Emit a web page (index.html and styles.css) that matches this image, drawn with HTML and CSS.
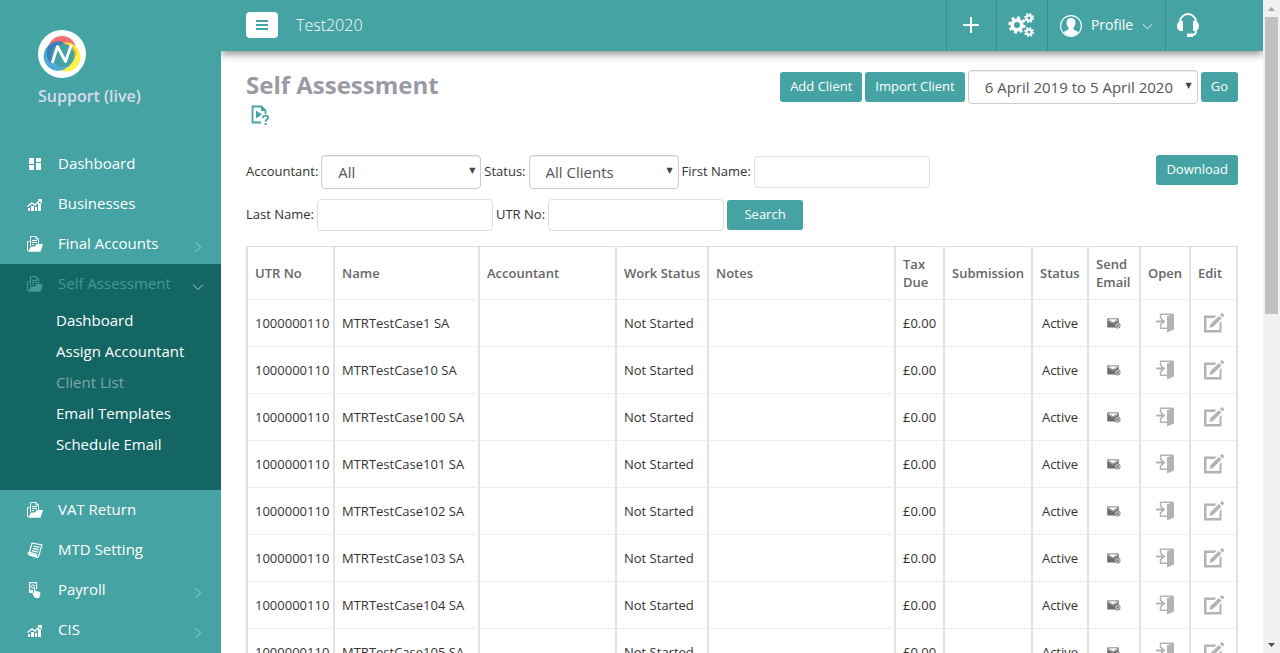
FILE: index.html
```html
<!DOCTYPE html>
<html lang="en">
<head>
<meta charset="utf-8">
<title>Self Assessment</title>
<link rel="stylesheet" href="styles.css">
</head>
<body>
<svg class="sprite" aria-hidden="true">
  <symbol id="i-grid" viewBox="0 0 16 16"><path fill="currentColor" d="M2 2h5v6H2zM9 2h5v4H9zM2 9h5v5H2zM9 7h5v7H9z"/></symbol>
  <symbol id="i-chart" viewBox="0 0 16 16"><path fill="currentColor" d="M1 12h2v3H1zM4 10h3v5H4zM8 11h2v4H8zM11 7h3v8h-3z"/><path fill="none" stroke="currentColor" stroke-width="1.5" d="M.5 10.500 5 7l3 2 5-5"/><path fill="currentColor" d="M10.500 3H15v4.500z"/></symbol>
  <symbol id="i-folder" viewBox="0 0 16 16"><path fill="none" stroke="currentColor" stroke-width="1" d="M3.500 10V.5H9L11.500 3v6M9 .5V3h2.500M.5 15V5.500h2M5 4.500h5M5 6.500h5M5 8.500h2"/><path fill="currentColor" d="M1 15.800 4 10.500h4L9.500 8H16l-2.500 7.800z"/></symbol>
  <symbol id="i-scroll" viewBox="0 0 16 16"><path fill="none" stroke="currentColor" stroke-width="1.200" d="M5 1l10 2-3.500 11.500c-.5 1-1.500 1-2 .5L1.500 12c-.5-1 0-2 1-2M5 1 2.500 10l7 2.500V15M6.500 4l6 1.300M5.800 6.300l6 1.400M5 8.600l6 1.600"/><path fill="currentColor" d="M.5 10.500l9 2.500v2.800L2 13.500z"/></symbol>
  <symbol id="i-pay" viewBox="0 0 16 16"><path fill="none" stroke="currentColor" stroke-width="1.200" d="M6 10.500H2.600V.6h7V7"/><path fill="currentColor" d="M3 8h3v2H3z"/><circle cx="6" cy="4.500" r="1.600" fill="none" stroke="currentColor"/><path fill="currentColor" d="M7 5.500c1 0 1.300.5 1.300 1.500v2l4 .7c1 .3 1.200 1 1 2.500L12 16.500H8.500L5.500 12c0-1 .5-1.200 1.200-.8z"/></symbol>
  <symbol id="i-chev" viewBox="0 0 12 12"><path fill="none" stroke="currentColor" d="M3.500 1 8.500 6 3.500 11"/></symbol>
  <symbol id="i-chevd" viewBox="0 0 12 12"><path fill="none" stroke="currentColor" d="M1 3.500 6 8.500 11 3.500"/></symbol>
  <symbol id="i-mail" viewBox="0 0 14 11"><path fill="#6b6e70" d="M.5 2 6 5.500 11.500 2v7.500H.5z"/><path fill="none" stroke="#8a8d8f" d="M.5 9V.8h11V4M1 1l5 4 5-4"/><circle cx="10.500" cy="7.500" r="3" fill="#7a7d7f"/><circle cx="10.500" cy="7.500" r="1.800" fill="none" stroke="#eee" stroke-width=".8"/></symbol>
  <symbol id="i-door" viewBox="0 0 18 20"><path fill="none" stroke="#b3b3b3" stroke-width="1.400" d="M4.500 6V1.200H17M4.500 11v4.300H11"/><path fill="#b3b3b3" d="M11 3.300 18 1v15.500L11 19.500zM0 7.500h5V4.800l4.500 3.700L5 12.200V9.500H0z"/></symbol>
  <symbol id="i-edit" viewBox="0 0 20 20"><path fill="#b3b3b3" d="M0 2.500h12.500L10.500 5H2.500v12h13V10l2-2v11.500H0z"/><path fill="#b3b3b3" d="M5.500 15l1-4L15 3l2.500 2.500-8.300 8.200zM16 2l1.500-1.700h1L20 2v1l-1.600 1.500z"/></symbol>
</svg>

<div class="app">
  <aside class="sidebar">
    <div class="brand">
      <svg class="brand-logo" viewBox="0 0 48 48" role="img" aria-label="Nomisma">
        <circle cx="24" cy="24" r="24" fill="#fff"/>
        <circle cx="24" cy="20" r="14" fill="#f36f72"/>
        <circle cx="28" cy="27" r="14.500" fill="#fff04a"/>
        <path d="M24 13.200a14.500 14.500 0 0 1 14 6.800l1 4-3 5L22 15z" fill="#fbc02d"/>
        <path d="M27 13.500a14.500 14.500 0 1 0-1 26l6-4-10-12z" fill="#4fa9d8"/>
        <path d="M10 16.500a14.500 14.500 0 0 1 15-4.500v6L14 34a14 14 0 0 1-4-17.500z" fill="#3f7fb8"/>
        <circle cx="25" cy="25.500" r="11.500" fill="#45a3a3"/>
        <path d="M14.500 32 19.500 16.500l8 15L33 16" fill="none" stroke="#fff" stroke-width="2.800" stroke-linecap="round" stroke-linejoin="round"/>
      </svg>
      <div class="brand-name">Support (live)</div>
    </div>
    <nav class="nav">
      <a class="nav-item" href="#"><svg class="nav-icon"><use href="#i-grid"/></svg><span>Dashboard</span></a>
      <a class="nav-item" href="#"><svg class="nav-icon"><use href="#i-chart"/></svg><span>Businesses</span></a>
      <a class="nav-item" href="#"><svg class="nav-icon"><use href="#i-folder"/></svg><span>Final Accounts</span><svg class="nav-chev"><use href="#i-chev"/></svg></a>
      <div class="nav-group">
        <a class="nav-item nav-current" href="#"><svg class="nav-icon"><use href="#i-folder"/></svg><span>Self Assessment</span><svg class="nav-chev"><use href="#i-chevd"/></svg></a>
        <div class="subnav">
          <a href="#">Dashboard</a>
          <a href="#">Assign Accountant</a>
          <a class="sub-current" href="#">Client List</a>
          <a href="#">Email Templates</a>
          <a href="#">Schedule Email</a>
        </div>
      </div>
      <a class="nav-item" href="#"><svg class="nav-icon"><use href="#i-folder"/></svg><span>VAT Return</span></a>
      <a class="nav-item" href="#"><svg class="nav-icon"><use href="#i-scroll"/></svg><span>MTD Setting</span></a>
      <a class="nav-item" href="#"><svg class="nav-icon"><use href="#i-pay"/></svg><span>Payroll</span><svg class="nav-chev"><use href="#i-chev"/></svg></a>
      <a class="nav-item" href="#"><svg class="nav-icon"><use href="#i-chart"/></svg><span>CIS</span><svg class="nav-chev"><use href="#i-chev"/></svg></a>
    </nav>
  </aside>

  <div class="main">
    <header class="topbar">
      <button class="menu-btn" type="button" aria-label="Toggle menu"><svg viewBox="0 0 12 10"><path fill="#45a3a3" d="M0 0h12v2H0zM0 4h12v2H0zM0 8h12v2H0z"/></svg></button>
      <div class="company">Test2020</div>
      <div class="top-actions">
        <button class="top-btn add" type="button" aria-label="Add"><svg viewBox="0 0 16 16"><path fill="#fff" d="M7 0h2v7h7v2H9v7H7V9H0V7h7z"/></svg></button>
        <button class="top-btn gears" type="button" aria-label="Settings"><svg viewBox="0 0 26 24">
          <circle cx="9" cy="12" r="4.800" fill="none" stroke="#fff" stroke-width="3.600"/><circle cx="9" cy="12" r="7.400" fill="none" stroke="#fff" stroke-width="2.600" stroke-dasharray="2.906 2.906"/>
          <circle cx="21" cy="5" r="2.600" fill="none" stroke="#fff" stroke-width="2.200"/><circle cx="21" cy="5" r="4.200" fill="none" stroke="#fff" stroke-width="1.800" stroke-dasharray="1.650 1.650"/>
          <circle cx="21" cy="19" r="2.600" fill="none" stroke="#fff" stroke-width="2.200"/><circle cx="21" cy="19" r="4.200" fill="none" stroke="#fff" stroke-width="1.800" stroke-dasharray="1.650 1.650"/></svg></button>
        <button class="top-btn profile" type="button">
          <svg class="avatar" viewBox="0 0 22 22"><circle cx="11" cy="11" r="10.400" fill="none" stroke="#fff" stroke-width="1.100"/><path fill="#fff" d="M11 3c3 0 4.500 1.800 4.500 4.500 0 2.500-1 4-2 5v2l5 2.500a9.500 9.500 0 0 1-15 0l5-2.500v-2c-1-1-2-2.500-2-5C6.500 4.800 8 3 11 3z"/></svg>
          <span>Profile</span>
          <svg class="caret"><use href="#i-chevd"/></svg>
        </button>
        <button class="top-btn support" type="button" aria-label="Support"><svg viewBox="0 0 22 24"><path fill="none" stroke="#fff" stroke-width="2" d="M3 10V9a8 8 0 0 1 16 0v9c0 2.500-1.500 4-4 4"/><path fill="#fff" d="M6 8v10H4c-2.500 0-4-2.200-4-5s1.500-5 4-5zM16 8v10h2c2.500 0 4-2.200 4-5s-1.500-5-4-5zM10 20.500h6V24h-6z"/></svg></button>
      </div>
    </header>

    <main class="content">
      <div class="page-head">
        <div>
          <h1>Self Assessment</h1>
          <a class="help" href="#" aria-label="Video help"><svg viewBox="0 0 18 20"><path fill="none" stroke="#45a3a3" stroke-width="1.800" d="M10 17.500H1.500V1.500h9l4 4V9"/><path fill="#45a3a3" d="M10 1v5h5zM5 5.500 11 9.500 5 13.500z"/><path fill="none" stroke="#45a3a3" stroke-width="1.800" d="M11.800 13c0-3.400 5.300-3 5.300-.3 0 2-2.500 1.800-2.500 4"/><path fill="#45a3a3" d="M13.600 18h2v2h-2z"/></svg></a>
        </div>
        <div class="head-actions">
          <button class="btn" type="button">Add Client</button>
          <button class="btn" type="button">Import Client</button>
          <div class="select year"><select aria-label="Tax year"><option>6 April 2019 to 5 April 2020</option></select></div>
          <button class="btn" type="button">Go</button>
        </div>
      </div>

      <form class="filter-bar">
        <div class="filters">
          <div class="field"><label for="acc">Accountant:</label><div class="select accountant"><select id="acc"><option>All</option></select></div></div>
          <div class="field"><label for="status">Status:</label><div class="select status"><select id="status"><option>All Clients</option></select></div></div>
          <div class="field"><label for="first">First Name:</label><input id="first" type="text"></div>
          <div class="field"><label for="last">Last Name:</label><input id="last" type="text"></div>
          <div class="field"><label for="utr">UTR No:</label><input id="utr" type="text"></div>
          <button class="btn search" type="button">Search</button>
        </div>
        <button class="btn" type="button">Download</button>
      </form>

      <table class="clients">
        <colgroup><col class="c-utr"><col class="c-name"><col class="c-acc"><col class="c-work"><col><col class="c-tax"><col class="c-sub"><col class="c-status"><col class="c-send"><col class="c-open"><col class="c-edit"></colgroup>
        <thead><tr><th>UTR No</th><th>Name</th><th>Accountant</th><th class="one-line">Work Status</th><th>Notes</th><th>Tax Due</th><th>Submission</th><th>Status</th><th>Send Email</th><th>Open</th><th>Edit</th></tr></thead>
        <tbody>
          <tr><td>1000000110</td><td>MTRTestCase1 SA</td><td></td><td>Not Started</td><td></td><td>£0.00</td><td></td><td class="mid">Active</td><td class="mid"><svg class="i-mail"><use href="#i-mail"/></svg></td><td class="mid"><svg class="i-door"><use href="#i-door"/></svg></td><td class="mid"><svg class="i-edit"><use href="#i-edit"/></svg></td></tr>
          <tr><td>1000000110</td><td>MTRTestCase10 SA</td><td></td><td>Not Started</td><td></td><td>£0.00</td><td></td><td class="mid">Active</td><td class="mid"><svg class="i-mail"><use href="#i-mail"/></svg></td><td class="mid"><svg class="i-door"><use href="#i-door"/></svg></td><td class="mid"><svg class="i-edit"><use href="#i-edit"/></svg></td></tr>
          <tr><td>1000000110</td><td>MTRTestCase100 SA</td><td></td><td>Not Started</td><td></td><td>£0.00</td><td></td><td class="mid">Active</td><td class="mid"><svg class="i-mail"><use href="#i-mail"/></svg></td><td class="mid"><svg class="i-door"><use href="#i-door"/></svg></td><td class="mid"><svg class="i-edit"><use href="#i-edit"/></svg></td></tr>
          <tr><td>1000000110</td><td>MTRTestCase101 SA</td><td></td><td>Not Started</td><td></td><td>£0.00</td><td></td><td class="mid">Active</td><td class="mid"><svg class="i-mail"><use href="#i-mail"/></svg></td><td class="mid"><svg class="i-door"><use href="#i-door"/></svg></td><td class="mid"><svg class="i-edit"><use href="#i-edit"/></svg></td></tr>
          <tr><td>1000000110</td><td>MTRTestCase102 SA</td><td></td><td>Not Started</td><td></td><td>£0.00</td><td></td><td class="mid">Active</td><td class="mid"><svg class="i-mail"><use href="#i-mail"/></svg></td><td class="mid"><svg class="i-door"><use href="#i-door"/></svg></td><td class="mid"><svg class="i-edit"><use href="#i-edit"/></svg></td></tr>
          <tr><td>1000000110</td><td>MTRTestCase103 SA</td><td></td><td>Not Started</td><td></td><td>£0.00</td><td></td><td class="mid">Active</td><td class="mid"><svg class="i-mail"><use href="#i-mail"/></svg></td><td class="mid"><svg class="i-door"><use href="#i-door"/></svg></td><td class="mid"><svg class="i-edit"><use href="#i-edit"/></svg></td></tr>
          <tr><td>1000000110</td><td>MTRTestCase104 SA</td><td></td><td>Not Started</td><td></td><td>£0.00</td><td></td><td class="mid">Active</td><td class="mid"><svg class="i-mail"><use href="#i-mail"/></svg></td><td class="mid"><svg class="i-door"><use href="#i-door"/></svg></td><td class="mid"><svg class="i-edit"><use href="#i-edit"/></svg></td></tr>
          <tr><td>1000000110</td><td>MTRTestCase105 SA</td><td></td><td>Not Started</td><td></td><td>£0.00</td><td></td><td class="mid">Active</td><td class="mid"><svg class="i-mail"><use href="#i-mail"/></svg></td><td class="mid"><svg class="i-door"><use href="#i-door"/></svg></td><td class="mid"><svg class="i-edit"><use href="#i-edit"/></svg></td></tr>
        </tbody>
      </table>
    </main>
  </div>

  <div class="scrollbar" aria-hidden="true">
    <svg viewBox="0 0 17 17"><path fill="#a3a3a3" d="M5 11 8.500 7 12 11z"/></svg>
    <div class="track"><div class="thumb"></div></div>
    <svg viewBox="0 0 17 17"><path fill="#505050" d="M5 7h7L8.500 11z"/></svg>
  </div>
</div>
</body>
</html>
```

FILE: styles.css
```css
* { box-sizing: border-box; }
body { margin: 0; font: 13px/18px "Open Sans", sans-serif; color: #333; background: #fff; }
button, input, select { font: inherit; margin: 0; }
a { color: inherit; text-decoration: none; }
.sprite { display: none; }

.app { display: flex; height: 100vh; overflow: hidden; }

/* Sidebar */
.sidebar { flex: 0 0 221px; background: #45a3a3; color: #fff; overflow: hidden; }
.brand { padding: 30px 38px 0; height: 144px; }
.brand-logo { display: block; width: 48px; height: 48px; }
.brand-name { margin-top: 6px; font-size: 16px; line-height: 24px; font-weight: 600; color: #d9dceb; white-space: nowrap; }
.nav-item { display: flex; align-items: center; height: 40px; padding: 0 17px 2px 27px; font-size: 15px; line-height: 20px; }
.nav-icon { width: 16px; height: 16px; margin: 2px 15px 0 0; flex: none; }
.nav-chev { width: 12px; height: 12px; margin: 8px 0 0 auto; color: #9fd0d0; }
.nav-group { background: #146664; padding-bottom: 30px; }
.nav-current { color: #3f9b99; }
.subnav { display: flex; flex-direction: column; padding: 1px 0 0 56px; font-size: 15px; line-height: 31px; }
.sub-current { color: #7ea9a8; }

/* Top bar */
.main { flex: 1; min-width: 0; display: flex; flex-direction: column; overflow: hidden; }
.topbar { flex: none; display: flex; align-items: center; height: 51px; padding: 0 0 2px 25px; background: #45a3a3; color: #fff; box-shadow: 0 3px 8px rgba(0, 0, 0, .45); }
.menu-btn { width: 32px; height: 26px; border: 0; border-radius: 4px; background: #fff; padding: 0; display: grid; place-items: center; }
.menu-btn svg { width: 12px; height: 10px; }
.company { margin-left: 18px; font-size: 16px; line-height: 24px; font-weight: 300; }
.top-actions { margin-left: auto; align-self: flex-start; display: flex; height: 51px; padding-right: 51px; }
.top-btn { display: flex; align-items: center; justify-content: center; border: 0; border-left: 1px solid #368c8c; background: none; color: #fff; padding: 0 2px 1px 0; font-size: 14px; }
.add { width: 50px; }
.add svg { width: 16px; height: 16px; }
.gears { width: 51px; }
.gears svg { width: 26px; height: 24px; }
.profile { width: 118px; gap: 9px; padding-right: 0; }
.avatar { width: 22px; height: 22px; margin-top: 2px; }
.caret { width: 11px; height: 11px; margin-top: 2px; }
.support { width: 47px; }
.support svg { width: 22px; height: 24px; }

/* Page */
.content { flex: 1; min-height: 0; padding: 19px 25px 0; }
.page-head { display: flex; justify-content: space-between; height: 85px; }
h1 { margin: 0; font-size: 24px; line-height: 30px; font-weight: 700; color: #9a9aa5; }
.help { display: block; margin: 5px 0 0 5px; }
.help svg { display: block; width: 18px; height: 20px; }
.head-actions { display: flex; align-items: center; gap: 3px; height: 34px; }
.btn { height: 30px; padding: 0 10px 2px; border: 0; border-radius: 3px; background: #45a3a3; color: #fff; white-space: nowrap; }
.select { position: relative; height: 34px; }
.select select { appearance: none; width: 100%; height: 34px; padding: 0 24px 0 16px; border: 1px solid #ccc; border-radius: 4px; background: #fff; box-shadow: inset 0 1px 1px rgba(0, 0, 0, .075); color: #555; font-size: 15px; line-height: 20px; }
.select::after { content: "▼"; position: absolute; right: 6px; top: 7px; font: 8px/18px "DejaVu Sans", sans-serif; color: #444; pointer-events: none; }
.year { width: 230px; }
.accountant { width: 160px; }
.status { width: 150px; }

.filter-bar { display: flex; justify-content: space-between; align-items: flex-start; margin-bottom: 15px; }
.filters { display: flex; flex-wrap: wrap; align-items: center; gap: 10px 3px; max-width: 700px; }
.field { display: flex; align-items: center; gap: 3px; }
.field label { padding-bottom: 2px; }
.field input { width: 176px; height: 32px; padding: 0 8px; border: 1px solid #ddd; border-radius: 4px; background: #fff; }
.search { width: 76px; }

.clients { width: 100%; table-layout: fixed; border: 1px solid #ddd; border-bottom: 0; border-collapse: separate; border-spacing: 0; }
.clients th, .clients td { height: 47px; padding: 0 7px; border: 1px solid #e2e2e2; border-top: 0; border-bottom-color: #eee; text-align: left; vertical-align: middle; white-space: nowrap; }
.clients th { height: 53px; font-weight: 600; color: #666; white-space: normal; }
.clients .one-line { padding-right: 0; white-space: nowrap; }
.clients .mid { padding: 0; text-align: center; }
.clients svg { display: block; margin: 0 auto; }
.c-utr { width: 87px; } .c-name { width: 145px; } .c-acc { width: 137px; } .c-work { width: 92px; }
.c-tax { width: 49px; } .c-sub { width: 88px; } .c-status { width: 56px; } .c-send { width: 52px; }
.c-open { width: 50px; } .c-edit { width: 47px; }
.i-mail { width: 14px; height: 11px; }
.i-door { width: 18px; height: 20px; }
.i-edit { width: 20px; height: 20px; }

/* Scroll bar */
.scrollbar { flex: 0 0 17px; display: flex; flex-direction: column; background: #f1f1f1; }
.scrollbar svg { width: 17px; height: 17px; flex: none; }
.track { flex: 1; padding: 0 2px; }
.thumb { height: 48%; background: #c1c1c1; }
```
